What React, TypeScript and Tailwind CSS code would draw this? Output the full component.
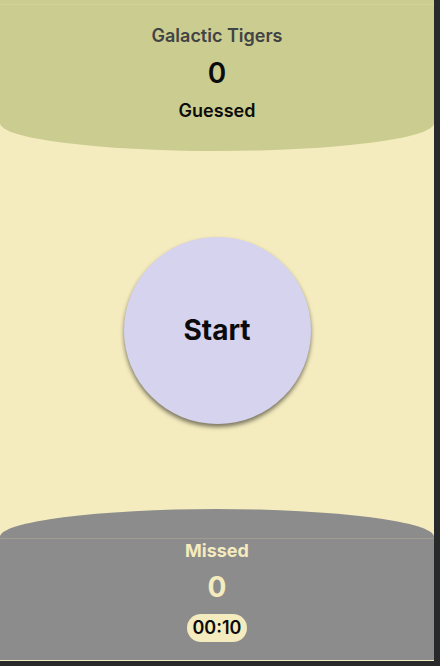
const team = "Galactic Tigers";
const guessed = 0;
const missed = 0;
const timeLeft = "00:10";

export default function App() {
  return (
    <div className="min-h-screen flex bg-[#28292a] pr-1.5 pb-[5px] font-['Inter',sans-serif] text-[#0b0b0b]">
      <main className="flex flex-1 flex-col bg-[#f4ebbe] pb-px text-center">
        <header className="rounded-[0_0_50%_50%/0_0_28px_28px] bg-[#cbcc8f] pt-1 pb-[26px]">
          <div className="border-t border-[#d3d397] pt-4">
            <h1 className="text-lg leading-[30px] font-semibold text-[#414345]">{team}</h1>
            <p className="mt-0.5 text-[28px] leading-10 font-semibold">{guessed}</p>
            <p className="mt-1 text-lg leading-7 font-semibold">Guessed</p>
          </div>
        </header>

        <section className="flex flex-1 items-center justify-center">
          <button
            type="button"
            className="size-[187px] rounded-full bg-[#d6d3ef] text-[28px] leading-10 font-bold shadow-[0_3px_4px_rgba(0,0,0,0.5)]"
          >
            Start
          </button>
        </section>

        <footer className="rounded-[50%_50%_0_0/28px_28px_0_0] bg-[#8c8c8c] pt-[29px]">
          <div className="border-t border-[#a09d90] pb-[18px] text-[#f4ebbe]">
            <p className="text-lg leading-6 font-bold">Missed</p>
            <p className="mt-1 text-[28px] leading-10 font-bold">{missed}</p>
            <time className="mx-auto mt-[7px] block w-[60px] rounded-full bg-[#f4ebbe] text-lg leading-7 font-semibold text-[#0b0b0b]">
              {timeLeft}
            </time>
          </div>
        </footer>
      </main>
    </div>
  );
}
